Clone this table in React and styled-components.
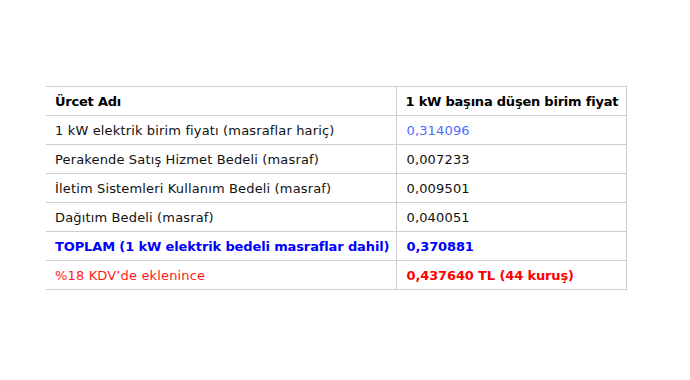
import React from "react";
import { styled, createGlobalStyle } from "styled-components";

const GlobalStyle = createGlobalStyle`
  html, body {
    margin: 0;
    padding: 0;
    background: #fff;
  }
  body {
    font-family: Verdana, "DejaVu Sans", sans-serif;
  }
`;

const rows = [
  { name: "1 kW elektrik birim fiyatı (masraflar hariç)", value: "0,314096", tone: "price" },
  { name: "Perakende Satış Hizmet Bedeli (masraf)", value: "0,007233" },
  { name: "İletim Sistemleri Kullanım Bedeli (masraf)", value: "0,009501" },
  { name: "Dağıtım Bedeli (masraf)", value: "0,040051" },
  { name: "TOPLAM (1 kW elektrik bedeli masraflar dahil)", value: "0,370881", tone: "total" },
  { name: "%18 KDV’de eklenince", value: "0,437640 TL (44 kuruş)", tone: "tax" },
];

const App = () => {
  return (
    <Page>
      <GlobalStyle />
      <PriceTable>
        <thead>
          <tr>
            <HeadCell>Ürcet Adı</HeadCell>
            <HeadCell>1 kW başına düşen birim fiyat</HeadCell>
          </tr>
        </thead>
        <tbody>
          {rows.map((row) => (
            <tr key={row.name}>
              <NameCell $tone={row.tone}>{row.name}</NameCell>
              <ValueCell $tone={row.tone}>{row.value}</ValueCell>
            </tr>
          ))}
        </tbody>
      </PriceTable>
    </Page>
  );
};

const Page = styled.div`
  padding: 86px 0 0 46px;
`;

const PriceTable = styled.table`
  width: 581px;
  border-collapse: collapse;
  table-layout: fixed;
  font-size: 13px;
  color: #111;

  th:first-child,
  td:first-child {
    width: 350px;
  }
`;

const Cell = styled.td`
  box-sizing: border-box;
  height: 29px;
  padding: 1px 9px 0;
  border-top: 1px solid #cfcfcf;
  border-bottom: 1px solid #cfcfcf;
  border-right: 1px solid #cfcfcf;
  text-align: left;
  white-space: nowrap;
  line-height: 16px;
  letter-spacing: 0.15px;
`;

const HeadCell = styled(Cell).attrs({ as: "th" })`
  font-weight: bold;
  color: #000;
  letter-spacing: -0.22px;
`;

const NameCell = styled(Cell)`
  font-weight: ${({ $tone }) => ($tone === "total" ? "bold" : "normal")};
  letter-spacing: ${({ $tone }) => ($tone === "total" ? "-0.13px" : "0.15px")};
  color: ${({ $tone }) =>
    $tone === "total" ? "#0000ff" : $tone === "tax" ? "#ff1a1a" : "#111"};
`;

const ValueCell = styled(Cell)`
  padding-left: 10px;
  font-weight: ${({ $tone }) =>
    $tone === "total" || $tone === "tax" ? "bold" : "normal"};
  letter-spacing: ${({ $tone }) =>
    $tone === "total" || $tone === "tax" ? "-0.13px" : "0.15px"};
  color: ${({ $tone }) =>
    $tone === "price"
      ? "#4d6bff"
      : $tone === "total"
      ? "#0000ff"
      : $tone === "tax"
      ? "#ff0000"
      : "#111"};
`;

export default App;
